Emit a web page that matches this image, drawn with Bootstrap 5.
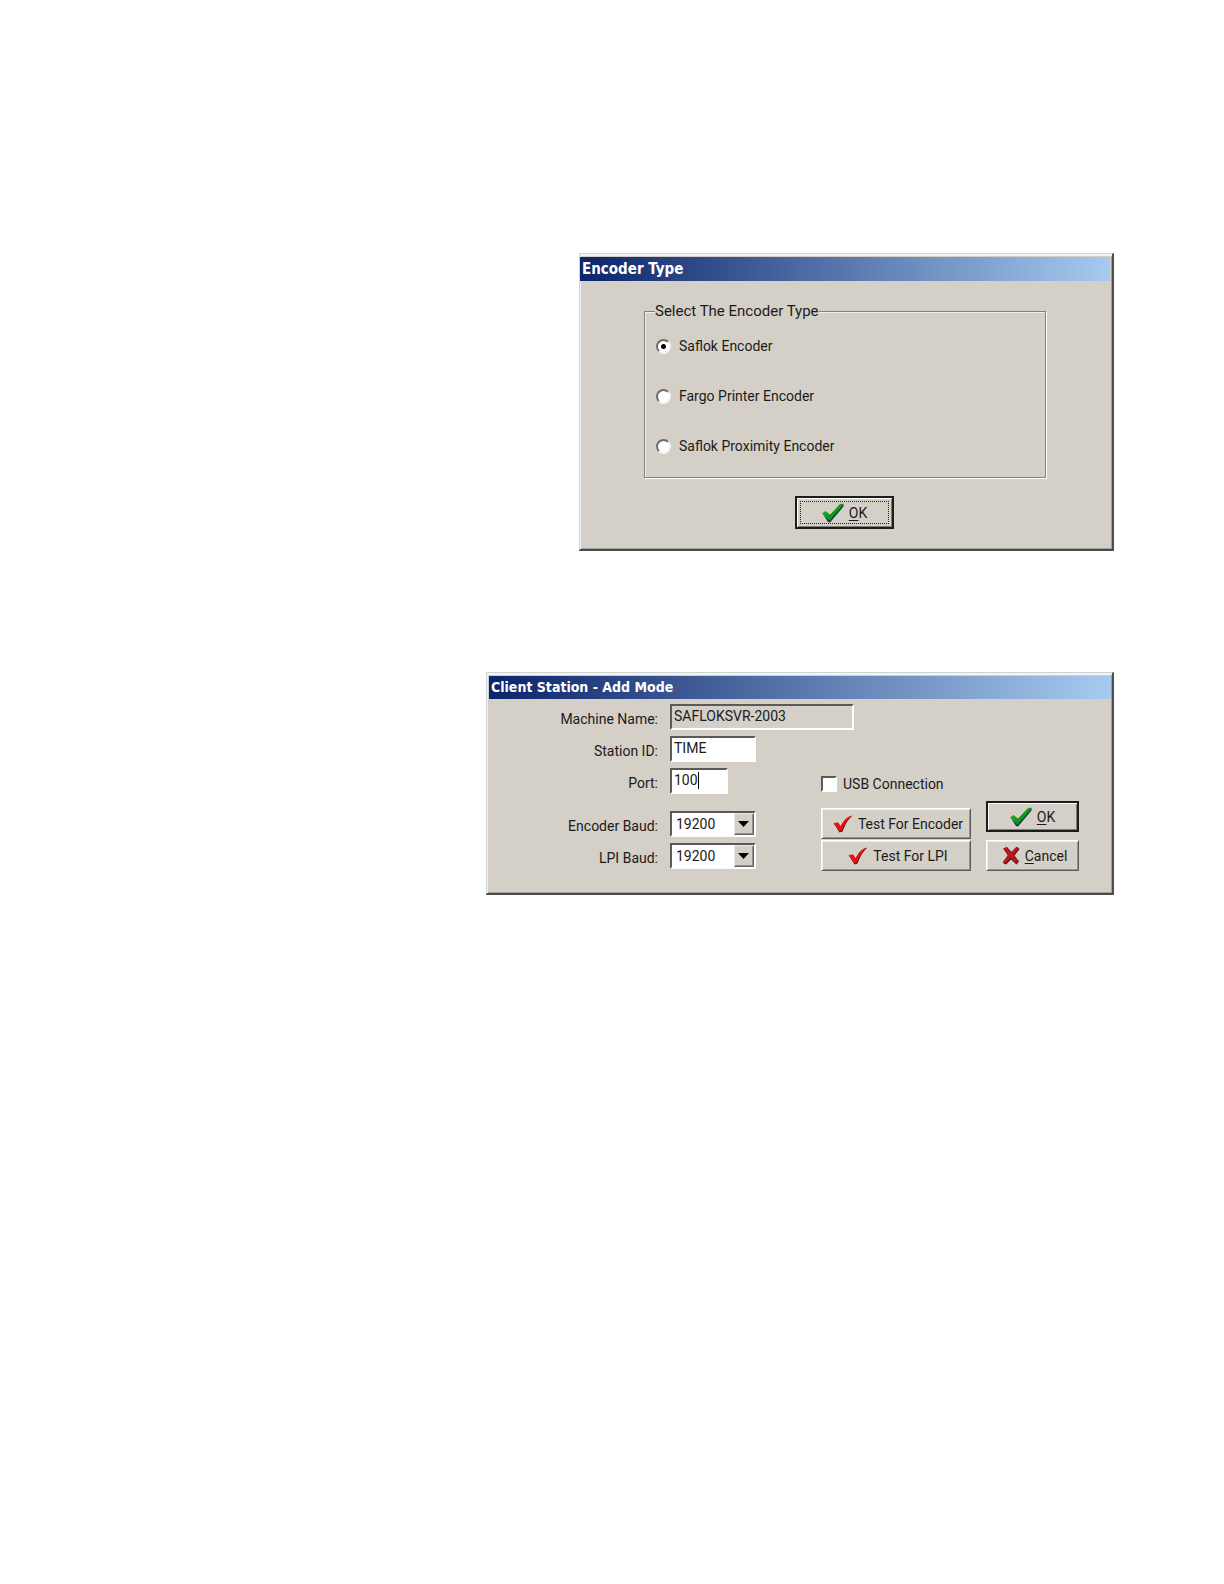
<!DOCTYPE html>
<html lang="en">
<head>
<meta charset="utf-8">
<meta name="viewport" content="width=device-width, initial-scale=1">
<title>Client Station Setup</title>
<link href="https://cdn.jsdelivr.net/npm/bootstrap@5.3.0/dist/css/bootstrap.min.css" rel="stylesheet">
<style>
  :root { --face: #d4d0c8; --shade: #808080; --ink: #1c1a18; }
  body { background: #fff; color: var(--ink); font: 14px/20px Roboto, "Liberation Sans", sans-serif; }
  .sheet { padding: 253px 110px 60px 24px; gap: 121px; }
  .dlg { max-width: 100%; background: var(--face); border: 1px solid #d0d4d4; border-right: 2px solid #4c4c4c; border-bottom: 2px solid #4c4a4a; box-shadow: inset 1px 2px 0 #f2f4f2, inset -1px -1px 0 #a09e9a; }
  .dlg-type { width: 535px; padding: 3px 2px 20px 0; }
  .dlg-station { width: 628px; padding: 3px 1px 22px 2px; }
  .caption-bar { height: 24px; padding-left: 2px; background: linear-gradient(90deg, #0c246a, #a6caf0); color: #fff; font: bold 15px/24px "DejaVu Sans Condensed", "DejaVu Sans", sans-serif; margin: 0; }
  .dlg-station .caption-bar { height: 23px; font-size: 14px; line-height: 23px; }
  .etched { width: 402px; height: 177px; margin: 20px 0 0 64px; border: 1px solid var(--shade); box-shadow: 1px 1px 0 #fff, inset 1px 1px 0 #f0eee8; padding: 0 11px; }
  .etched legend { float: none; width: auto; font-size: 15px; line-height: 20px; margin: 0 0 15px -1px; padding: 0; background: var(--face); }
  .choices { gap: 30px; }
  .choice { gap: 8px; }
  .choice input { appearance: none; width: 15px; height: 15px; margin: 0; border-radius: 50%; background: #fff; border: 2px solid; border-color: #6c6c6c #f4f4f0 #f4f4f0 #6c6c6c; }
  .choice input:checked { background: radial-gradient(circle, #000 2px, #fff 3px); }
  .tick-row { height: 16px; gap: 6px; }
  .tick-row input { appearance: none; width: 16px; height: 16px; margin: 0; background: #fff; }
  .sunken { border: 2px solid; border-color: #5c5a58 #fff #fff #5c5a58; }
  .field { height: 26px; padding: 0 2px 2px; background: #fff; color: var(--ink); border-radius: 0; appearance: none; display: block; font: inherit; outline: none; }
  .field[readonly] { background: var(--face); }
  select.field { padding: 0 22px 0 4px; }
  .w-name { width: 184px; } .w-id { width: 86px; } .w-port { width: 58px; }
  .caret { left: 28px; top: 4px; width: 1px; height: 17px; background: #000; }
  .drop { right: 2px; top: 2px; width: 20px; height: 22px; background: var(--face); border: 1px solid; border-color: #eceae4 #666 #666 #eceae4; box-shadow: inset -1px -1px 0 #929090; pointer-events: none; }
  .form-line { gap: 12px; }
  .form-line label { width: 169px; text-align: right; padding-top: 4px; }
  .first-line { margin: 5px 0 6px; }
  .lines { gap: 6px; }
  .lines .apart { margin-top: 11px; }
  .key { height: 31px; padding: 0 0 0 4px; gap: 5px; color: var(--ink); font: inherit; background: var(--face); border: 1px solid; border-color: #fff #5c5a58 #5c5a58 #fff; box-shadow: inset 1px 1px 0 #eeece6, inset -1px -1px 0 #969490; border-radius: 0; }
  .key-default { padding: 0; border: 2px solid #1c1c1c; box-shadow: inset 1px 1px 0 #fff, inset -1px -1px 0 #807e7a; }
  .key-focus { width: 99px; height: 33px; margin: 18px 0 0 215px; position: relative; }
  .key-focus::after { content: ""; position: absolute; inset: 3px; border: 1px dotted #222; }
  .tests { width: 150px; margin-left: 65px; padding-top: 40px; }
  .tests .key + .key { margin-top: 1px; }
  .tests .tick-row { margin-bottom: 16px; }
  .ends { width: 93px; margin-left: 15px; padding-top: 65px; gap: 8px; }
  .key u { text-underline-offset: 2px; }
</style>
</head>
<body>
<svg width="0" height="0" class="position-absolute" aria-hidden="true">
  <linearGradient id="leaf" x1="0" y1="0" x2="1" y2="1"><stop offset="0" stop-color="#2fc42c"/><stop offset=".6" stop-color="#0b9612"/><stop offset="1" stop-color="#075012"/></linearGradient>
  <symbol id="ok-mark" viewBox="0 0 22 20"><path d="M1 11 4 8.500 8 12 18 1.500 21.500 1 21.500 3.500 8 19.500 6 19Z" fill="#12304a"/><path d="M0 10.500 3.500 8 7.500 12.500 18 1 21 .5 20.500 3 7.500 18Z" fill="url(#leaf)"/></symbol>
  <symbol id="test-mark" viewBox="0 0 20 18"><path d="M1 8.500 5.500 8 7.500 11.500C10.500 6 14 2 19.500.5 14.500 5 12 10 9.500 16.500L6.500 17.500Z" fill="#5a1010"/><path d="M.5 8 5 7.500 7.500 12C10 6 13.500 2 19 .5 14 4.500 11 10 8.500 15.500L6.500 16.500Z" fill="#ee1111"/></symbol>
  <symbol id="no-mark" viewBox="0 0 18 19"><path d="M1.500 3 5 1 9.500 6 15 1 17.500 3 12.500 9.500 17 15.500 14.500 18.500 9 13.500 4 18.500 1 17 6 9.500Z" fill="#4a0c10"/><path d="M1 2.500 4.500 1 9 6.500 14.500.5 16.500 2.500 11.500 9 16 15.500 14 17.500 8.500 12 3.500 17.500 1 15.500 6 9Z" fill="#bd161c"/></symbol>
</svg>
<main class="sheet d-flex flex-column align-items-end">
  <section class="dlg dlg-type" aria-labelledby="type-title">
    <h1 class="caption-bar" id="type-title">Encoder Type</h1>
    <form>
      <fieldset class="etched">
        <legend>Select The Encoder Type</legend>
        <div class="choices d-flex flex-column">
          <div class="choice d-flex align-items-center"><input type="radio" name="enc" id="enc1" checked><label for="enc1">Saflok Encoder</label></div>
          <div class="choice d-flex align-items-center"><input type="radio" name="enc" id="enc2"><label for="enc2">Fargo Printer Encoder</label></div>
          <div class="choice d-flex align-items-center"><input type="radio" name="enc" id="enc3"><label for="enc3">Saflok Proximity Encoder</label></div>
        </div>
      </fieldset>
      <button type="button" class="key key-default key-focus d-flex align-items-center justify-content-center"><svg width="22" height="20" aria-hidden="true"><use href="#ok-mark"/></svg><span><u>O</u>K</span></button>
    </form>
  </section>

  <section class="dlg dlg-station" aria-labelledby="station-title">
    <h2 class="caption-bar" id="station-title">Client Station - Add Mode</h2>
    <form class="d-flex flex-column">
      <div class="form-line first-line d-flex align-items-center">
        <label for="machine">Machine Name:</label><input id="machine" class="field sunken w-name" value="SAFLOKSVR-2003" readonly>
      </div>
      <div class="d-flex align-items-start">
        <div class="lines d-flex flex-column">
          <div class="form-line d-flex align-items-center"><label for="station">Station ID:</label><input id="station" class="field sunken w-id" value="TIME"></div>
          <div class="form-line d-flex align-items-center"><label for="port">Port:</label><div class="position-relative"><input id="port" class="field sunken w-port" value="100"><span class="caret position-absolute"></span></div></div>
          <div class="form-line d-flex align-items-center apart"><label for="ebaud">Encoder Baud:</label><div class="position-relative"><select id="ebaud" class="field sunken w-id"><option>19200</option></select><svg class="drop position-absolute" viewBox="0 0 18 20" aria-hidden="true"><path d="M3 7h11l-5.500 6z"/></svg></div></div>
          <div class="form-line d-flex align-items-center"><label for="lbaud">LPI Baud:</label><div class="position-relative"><select id="lbaud" class="field sunken w-id"><option>19200</option></select><svg class="drop position-absolute" viewBox="0 0 18 20" aria-hidden="true"><path d="M3 7h11l-5.500 6z"/></svg></div></div>
        </div>
        <div class="tests d-flex flex-column">
          <div class="tick-row d-flex align-items-center"><input type="checkbox" id="usb" class="sunken"><label for="usb">USB Connection</label></div>
          <button type="button" class="key d-flex align-items-center justify-content-center"><svg width="20" height="18" aria-hidden="true"><use href="#test-mark"/></svg>Test For Encoder</button>
          <button type="button" class="key d-flex align-items-center justify-content-center"><svg width="20" height="18" aria-hidden="true"><use href="#test-mark"/></svg>Test For LPI</button>
        </div>
        <div class="ends d-flex flex-column">
          <button type="button" class="key key-default d-flex align-items-center justify-content-center"><svg width="22" height="20" aria-hidden="true"><use href="#ok-mark"/></svg><span><u>O</u>K</span></button>
          <button type="button" class="key d-flex align-items-center justify-content-center"><svg width="18" height="19" aria-hidden="true"><use href="#no-mark"/></svg><span><u>C</u>ancel</span></button>
        </div>
      </div>
    </form>
  </section>
</main>
<script src="https://cdn.jsdelivr.net/npm/bootstrap@5.3.0/dist/js/bootstrap.bundle.min.js"></script>
</body>
</html>
